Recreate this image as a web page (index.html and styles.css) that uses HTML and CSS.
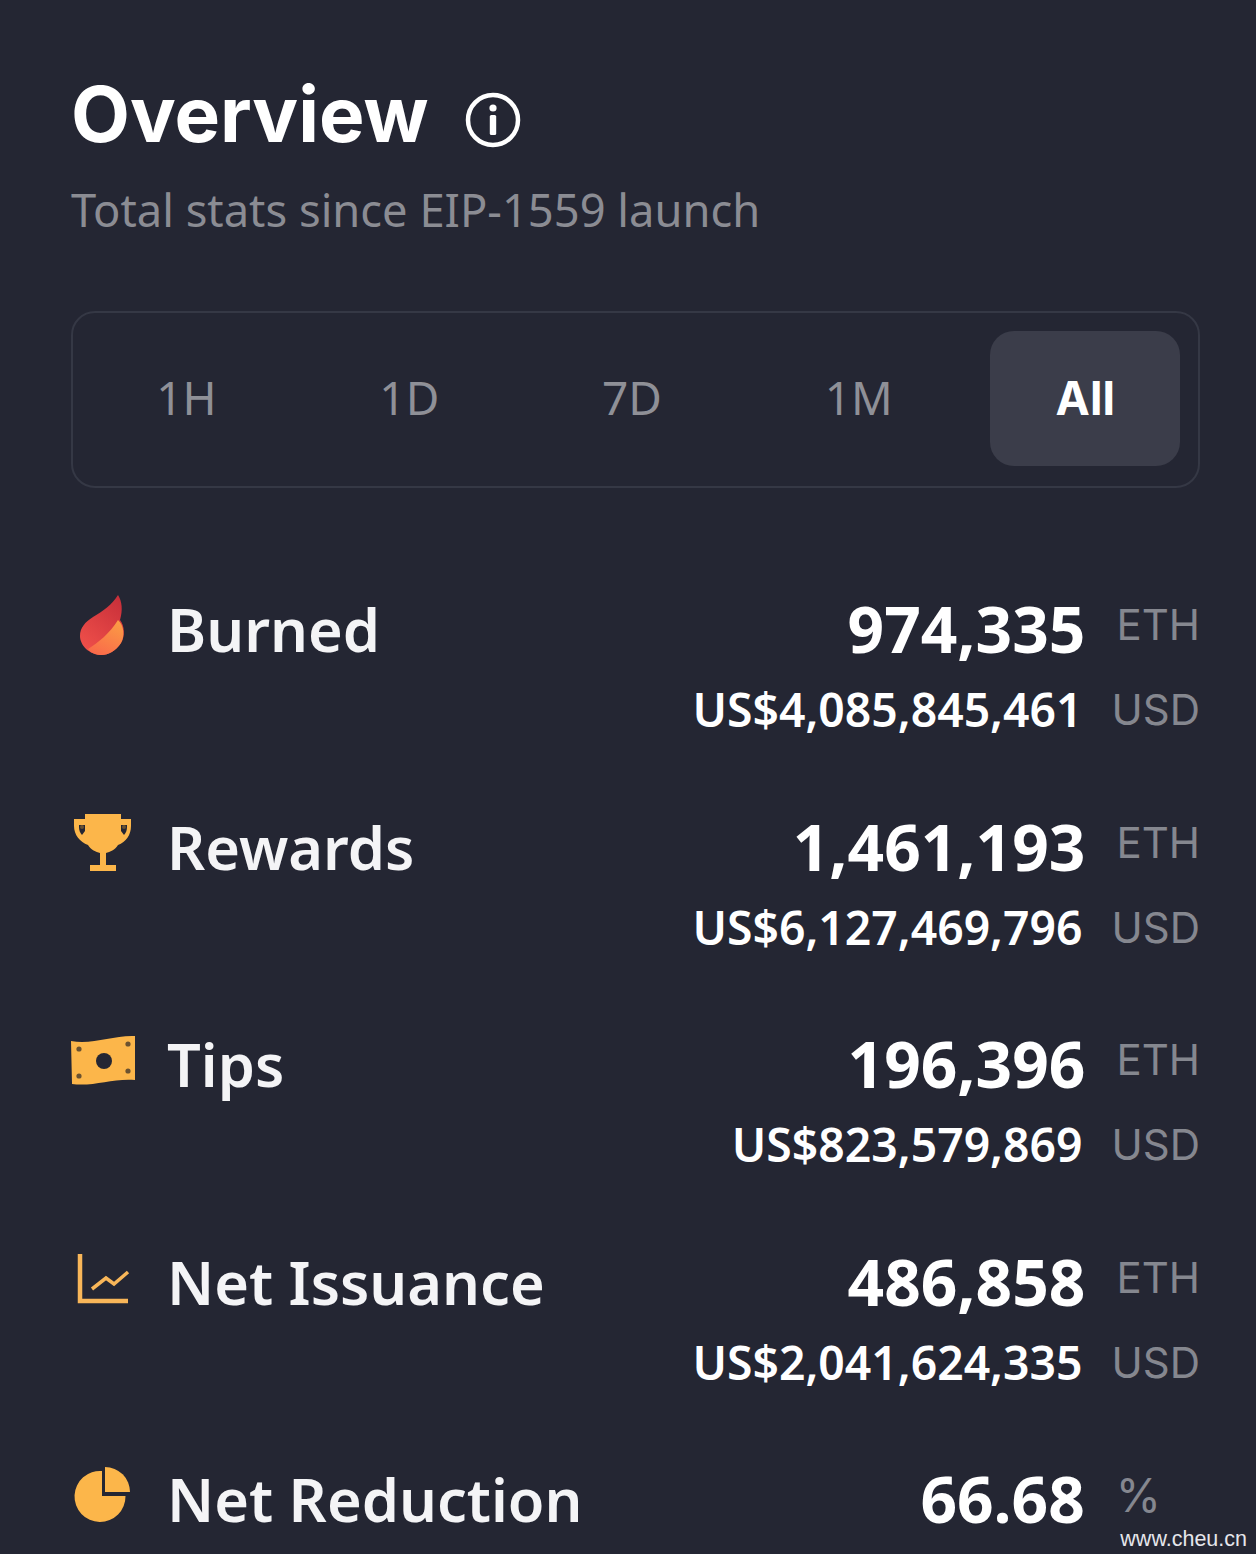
FILE: index.html
```html
<!DOCTYPE html>
<html lang="en">
<head>
  <meta charset="UTF-8">
  <meta name="viewport" content="width=device-width, initial-scale=1">
  <title>Overview</title>
  <link rel="stylesheet" href="styles.css">
</head>
<body>
  <div class="overview">
    <div class="title-row">
      <h1>Overview</h1>
      <svg class="info-icon" viewBox="0 0 56 56">
        <circle cx="28" cy="28" r="25" fill="none" stroke="#fff" stroke-width="4.5"/>
        <circle cx="28" cy="16" r="3.6" fill="#fff"/>
        <rect x="24.8" y="23" width="6.4" height="20" rx="1.5" fill="#fff"/>
      </svg>
    </div>
    <p class="subtitle">Total stats since EIP-1559 launch</p>

    <div class="tabs">
      <span class="tab">1H</span>
      <span class="tab">1D</span>
      <span class="tab">7D</span>
      <span class="tab">1M</span>
      <span class="tab active">All</span>
    </div>

    <div class="stat">
      <div class="stat-label">
        <svg class="stat-icon" viewBox="0 0 64 64">
          <defs>
            <linearGradient id="flameTop" x1="0.8" y1="0" x2="0.2" y2="1">
              <stop offset="0" stop-color="#c9303a"/>
              <stop offset="1" stop-color="#f0504a"/>
            </linearGradient>
            <linearGradient id="flameLow" x1="0.7" y1="0" x2="0.2" y2="1">
              <stop offset="0" stop-color="#fb9a45"/>
              <stop offset="1" stop-color="#f9694a"/>
            </linearGradient>
          </defs>
          <path d="M47 2C51 8 52 17 49 27C54 33 54 44 50 50C45 58 37 62 31 62C18 62 9 52 9 43C9 35 14 29 22 24C32 18 41 12 47 2Z" fill="url(#flameTop)"/>
          <path d="M47 27C53 32 54 43 50 50C45 58 37 62 31 62C25 62 20 60 17 56C27 50 39 40 47 27Z" fill="url(#flameLow)"/>
        </svg>
        <span>Burned</span>
      </div>
      <div class="stat-values">
        <div class="line"><span class="amount">974,335</span><span class="unit">ETH</span></div>
        <div class="line"><span class="usd">US$4,085,845,461</span><span class="unit">USD</span></div>
      </div>
    </div>

    <div class="stat">
      <div class="stat-label">
        <svg class="stat-icon" viewBox="0 0 64 64">
          <path fill-rule="evenodd" fill="#fcb64a" d="M14 3H50V8H60V15C60 24 55 31 47 34C44 39 39 41 35 42V54H45V60H19V54H29V42C25 41 20 39 17 34C9 31 3 24 3 15V8H14ZM8 14V16C8 19 9 22 11 24L14 20V14ZM56 14H50V20L53 24C55 22 56 19 56 16Z"/>
          <circle cx="11" cy="16" r="2" fill="#6b5230"/>
          <circle cx="53" cy="16" r="2" fill="#6b5230"/>
        </svg>
        <span>Rewards</span>
      </div>
      <div class="stat-values">
        <div class="line"><span class="amount">1,461,193</span><span class="unit">ETH</span></div>
        <div class="line"><span class="usd">US$6,127,469,796</span><span class="unit">USD</span></div>
      </div>
    </div>

    <div class="stat">
      <div class="stat-label">
        <svg class="stat-icon" viewBox="0 0 64 64">
          <path fill="#fcb64a" d="M0 13C22 17 42 7 64 8V52C42 50 22 59 1 56Z"/>
          <circle cx="33" cy="33" r="8" fill="#242633"/>
          <circle cx="8" cy="21" r="2.6" fill="#6b5230"/>
          <circle cx="8" cy="48" r="2.6" fill="#6b5230"/>
          <circle cx="57" cy="16" r="2.6" fill="#6b5230"/>
          <circle cx="57" cy="43" r="2.6" fill="#6b5230"/>
        </svg>
        <span>Tips</span>
      </div>
      <div class="stat-values">
        <div class="line"><span class="amount">196,396</span><span class="unit">ETH</span></div>
        <div class="line"><span class="usd">US$823,579,869</span><span class="unit">USD</span></div>
      </div>
    </div>

    <div class="stat">
      <div class="stat-label">
        <svg class="stat-icon" viewBox="0 0 64 64">
          <path d="M9 8V55H57" fill="none" stroke="#f8b659" stroke-width="4.5"/>
          <path d="M21 43L35 32L43 38L57 26" fill="none" stroke="#f8b659" stroke-width="3.5"/>
        </svg>
        <span>Net Issuance</span>
      </div>
      <div class="stat-values">
        <div class="line"><span class="amount">486,858</span><span class="unit">ETH</span></div>
        <div class="line"><span class="usd">US$2,041,624,335</span><span class="unit">USD</span></div>
      </div>
    </div>

    <div class="stat">
      <div class="stat-label">
        <svg class="stat-icon" viewBox="0 0 64 64">
          <path fill="#fcb64a" d="M31 8V33H54.5A25.5 25.5 0 1 1 31 8Z"/>
          <path fill="#fcb64a" d="M34 4A25 25 0 0 1 59 29H34Z"/>
        </svg>
        <span>Net Reduction</span>
      </div>
      <div class="stat-values">
        <div class="line"><span class="amount">66.68</span><span class="unit percent">%</span></div>
      </div>
    </div>
  </div>

  <span class="watermark">www.cheu.cn</span>
</body>
</html>
```

FILE: styles.css
```css
html, body {
  height: 100%;
}

body {
  margin: 0;
  background: #242633;
  color: #fff;
  font-family: "Noto Sans", sans-serif;
  overflow: hidden;
  position: relative;
}

.overview {
  padding: 66px 56px 0 71px;
}

.title-row {
  display: flex;
  align-items: center;
  gap: 36px;
  height: 96px;
}

h1 {
  margin: 0;
  font-family: Inter, sans-serif;
  font-size: 76.5px;
  font-weight: 700;
  line-height: 96px;
}

.info-icon {
  width: 56px;
  height: 56px;
  margin-top: 12px;
}

.subtitle {
  margin: 21px 0 0;
  height: 54px;
  color: #8b8c93;
  font-size: 45.3px;
  line-height: 54px;
}

.tabs {
  display: flex;
  gap: 32.5px;
  margin-top: 74px;
  padding: 18px 18px 20px;
  height: 135px;
  border: 2px solid #353845;
  border-radius: 24px;
}

.tab {
  display: flex;
  align-items: center;
  flex: auto;
  justify-content: center;
  padding: 0 65px 4px;
  border-radius: 24px;
  color: #8f9097;
  font-size: 46px;
}

.tab.active {
  padding-bottom: 2px;
  background: #3b3d4a;
  color: #fff;
  font-family: Inter, sans-serif;
  font-weight: 700;
}

.stat {
  display: flex;
  justify-content: space-between;
  height: 217.5px;
}

.stat:last-child {
  height: auto;
}

.tabs + .stat {
  margin-top: 105px;
}

.stat-label {
  display: flex;
  align-items: flex-start;
  font-size: 59.5px;
  font-weight: 600;
  line-height: 72px;
  color: #f4f4f6;
}

.stat-icon {
  width: 64px;
  height: 64px;
  margin-right: 32px;
}

.stat-values {
  display: flex;
  flex-direction: column;
  gap: 9px;
}

.line {
  display: flex;
  justify-content: flex-end;
  align-items: flex-start;
  gap: 29px;
}

.amount {
  margin-right: 2px;
  font-size: 64px;
  font-weight: 700;
  line-height: 72px;
}

.usd {
  font-size: 46.3px;
  font-weight: 600;
  line-height: 72px;
}

.unit {
  color: #85878f;
  font-family: Inter, sans-serif;
  font-size: 42px;
  line-height: 64px;
}

.line:nth-child(2) .unit {
  line-height: 72px;
}

.unit.percent {
  margin-right: 39px;
  font-size: 46px;
}

.watermark {
  position: absolute;
  right: 9px;
  bottom: 2px;
  color: #e6e6ec;
  font-family: "Liberation Sans", sans-serif;
  font-size: 21.5px;
}
```
